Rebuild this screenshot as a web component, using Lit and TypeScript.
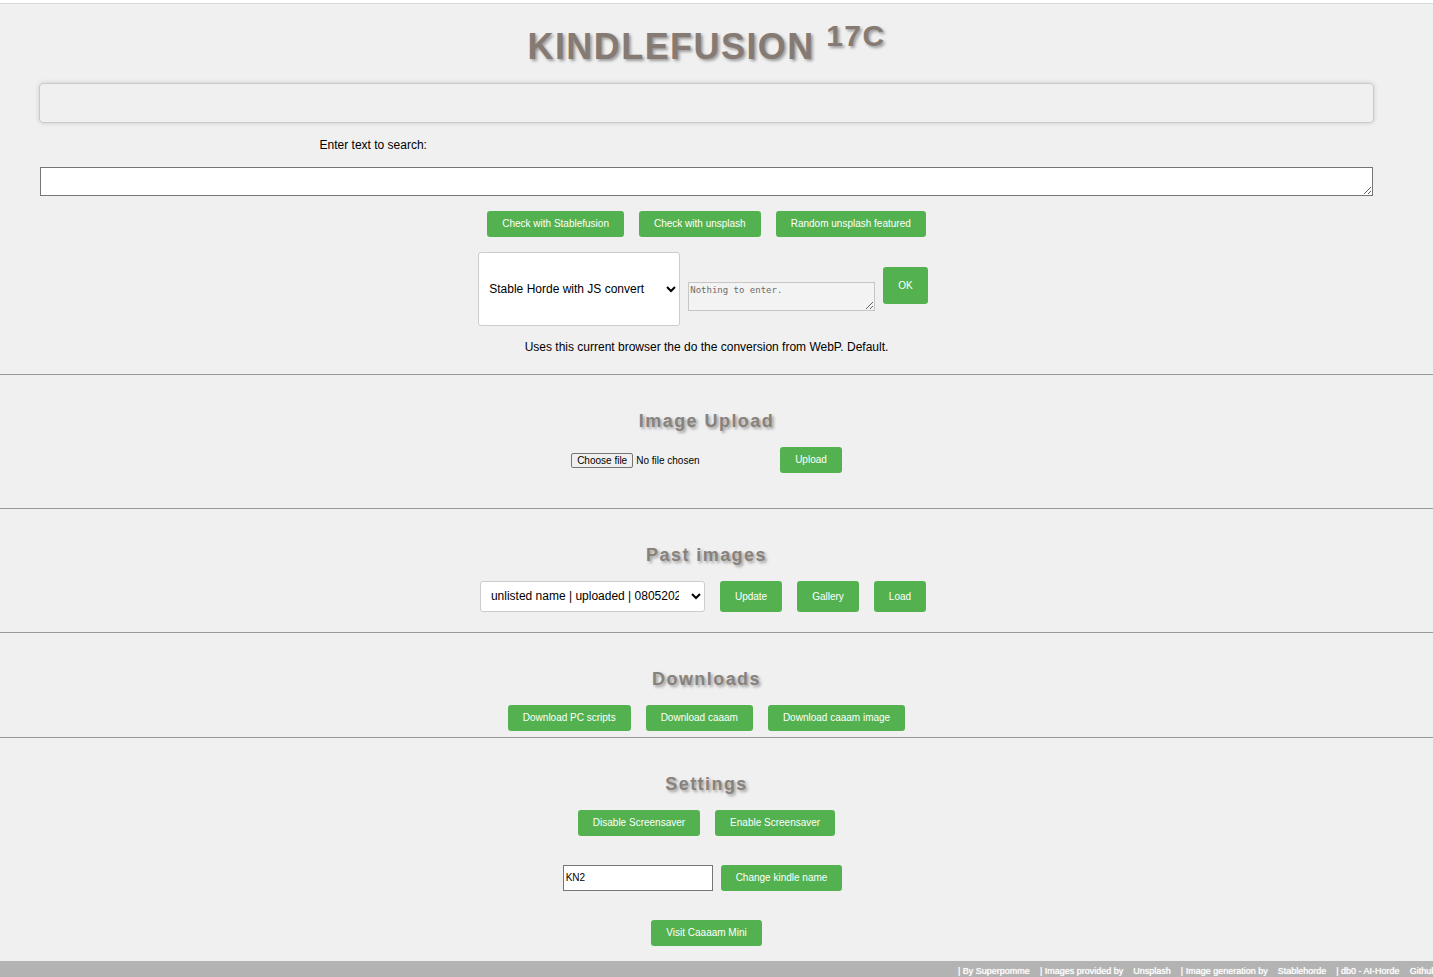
import { LitElement, html, css } from "lit";
import { customElement } from "lit/decorators.js";

@customElement("app-root")
export class AppRoot extends LitElement {
  static styles = css`
    :host {
      display: block;
      min-height: 100vh;
      background: #f0f0f0;
      color: #000;
      font: 12px/16px "Liberation Sans", Arial, sans-serif;
      border-top: 3px solid #fff;
      box-sizing: border-box;
      overflow: hidden;
    }
    * {
      box-sizing: border-box;
    }
    .top {
      border-top: 1px solid #d8d8d8;
      padding: 16px 60px 19px 40px;
    }
    h1,
    h2 {
      margin: 0;
      text-align: center;
      text-shadow: 2px 2px 3px rgba(0, 0, 0, 0.35);
    }
    h1 {
      color: #857b74;
      font-size: 36px;
      line-height: 54px;
      letter-spacing: 0.04em;
    }
    sup {
      font-size: 30px;
      line-height: 0;
    }
    h2 {
      color: #88827d;
      font-size: 18px;
      line-height: 20px;
      letter-spacing: 0.08em;
    }
    .status {
      height: 40px;
      margin: 9px -1px 14px;
      border: 1px solid #c9c9c9;
      border-radius: 4px;
      box-shadow: 0 0 5px rgba(0, 0, 0, 0.15);
    }
    .search {
      display: grid;
      grid-template-columns: 1fr 1fr;
      row-gap: 14px;
      text-align: center;
    }
    textarea {
      display: block;
      height: 29px;
      margin: 0;
      padding: 2px;
      border: 1px solid #767676;
      border-radius: 0;
      font: 9px/11px "DejaVu Sans Mono", monospace;
      overflow: hidden;
    }
    .query {
      grid-column: 1 / -1;
      width: 100%;
    }
    .row {
      display: flex;
      justify-content: center;
      gap: 15px;
    }
    .actions {
      margin: 15px 0;
    }
    .convert {
      align-items: flex-start;
      gap: 8px;
      padding-right: 7px;
    }
    .convert textarea {
      width: 187px;
      margin-top: 30px;
      padding: 2px 1px;
      background: #f3f3f3;
      border-color: #c6c6c6;
    }
    .convert textarea::placeholder {
      color: #6c6c6c;
    }
    .convert button {
      height: 37px;
      margin-top: 15px;
    }
    select {
      background: #fff;
      color: #000;
      border: 1px solid #ccc;
      border-radius: 3px;
      font: 12px "Liberation Sans", Arial, sans-serif;
      padding: 0 0 0 6px;
    }
    .method {
      width: 202px;
      height: 74px;
    }
    .history {
      width: 225px;
      height: 31px;
      padding: 0 9px 1px 6px;
    }
    .past {
      padding-right: 7px;
    }
    .past button {
      height: 31px;
    }
    button {
      height: 26px;
      padding: 0 15px 1px;
      border: 0;
      border-radius: 3px;
      background: #53b24f;
      color: #fff;
      font: 10px "Liberation Sans", Arial, sans-serif;
      white-space: nowrap;
    }
    .hint {
      margin: 13px 0 0;
      text-align: center;
    }
    section {
      border-top: 1px solid #999;
      padding: 36px 20px 20px 0;
    }
    section h2 {
      margin-bottom: 16px;
    }
    .upload {
      padding-bottom: 35px;
    }
    .downloads {
      padding-bottom: 6px;
    }
    .settings {
      padding-bottom: 15px;
    }
    .upload .row,
    .name {
      align-items: center;
    }
    .file {
      display: flex;
      align-items: center;
      gap: 3px;
      width: 194px;
      font-size: 10px;
      line-height: 13px;
    }
    .file input {
      position: absolute;
      width: 1px;
      height: 1px;
      opacity: 0;
    }
    .file label {
      padding: 0 5px;
      border: 1px solid #767676;
      border-radius: 2px;
      background: #efefef;
    }
    .file input:focus-visible + label {
      outline: 2px solid #53b24f;
    }
    input[type="text"] {
      width: 150px;
      height: 26px;
      padding: 1px 2px 2px;
      border: 1px solid #767676;
      border-radius: 0;
      font: 10px "Liberation Sans", Arial, sans-serif;
    }
    .name {
      gap: 8px;
      margin: 29px 0;
      padding-right: 8px;
    }
    footer {
      display: flex;
      gap: 10px;
      padding: 5px 0 0 calc(100% - 475px);
      background: #b3b3b3;
      color: #fff;
      font-size: 9px;
      line-height: 11px;
      white-space: nowrap;
      overflow: hidden;
      text-shadow: 0 0 1px #fff;
    }
    a {
      color: inherit;
      text-decoration: none;
    }
  `;

  render() {
    return html`
      <div class="top">
        <h1>KINDLEFUSION <sup>17C</sup></h1>
        <div class="status" role="status"></div>
        <div class="search">
          <label for="query">Enter text to search:</label>
          <textarea id="query" class="query"></textarea>
        </div>
        <div class="row actions">
          <button>Check with Stablefusion</button>
          <button>Check with unsplash</button>
          <button>Random unsplash featured</button>
        </div>
        <div class="row convert">
          <select class="method" aria-label="Conversion method">
            <option>Stable Horde with JS convert</option>
          </select>
          <textarea
            disabled
            aria-label="Method options"
            placeholder="Nothing to enter."
          ></textarea>
          <button>OK</button>
        </div>
        <p class="hint">
          Uses this current browser the do the conversion from WebP. Default.
        </p>
      </div>

      <section class="upload">
        <h2>Image Upload</h2>
        <div class="row">
          <div class="file">
            <input id="file" type="file" />
            <label for="file">Choose file</label>
            <span>No file chosen</span>
          </div>
          <button>Upload</button>
        </div>
      </section>

      <section>
        <h2>Past images</h2>
        <div class="row past">
          <select class="history" aria-label="Past images">
            <option>unlisted name | uploaded | 08052023</option>
          </select>
          <button>Update</button>
          <button>Gallery</button>
          <button>Load</button>
        </div>
      </section>

      <section class="downloads">
        <h2>Downloads</h2>
        <div class="row">
          <button>Download PC scripts</button>
          <button>Download caaam</button>
          <button>Download caaam image</button>
        </div>
      </section>

      <section class="settings">
        <h2>Settings</h2>
        <div class="row">
          <button>Disable Screensaver</button>
          <button>Enable Screensaver</button>
        </div>
        <div class="row name">
          <input type="text" aria-label="Kindle name" value="KN2" />
          <button>Change kindle name</button>
        </div>
        <div class="row">
          <button>Visit Caaaam Mini</button>
        </div>
      </section>

      <footer>
        <span>| By Superpomme</span>
        <span>| Images provided by</span>
        <a href="#unsplash">Unsplash</a>
        <span>| Image generation by</span>
        <a href="#stablehorde">Stablehorde</a>
        <span>| db0 - AI-Horde</span>
        <a href="#github">Github</a>
      </footer>
    `;
  }
}
